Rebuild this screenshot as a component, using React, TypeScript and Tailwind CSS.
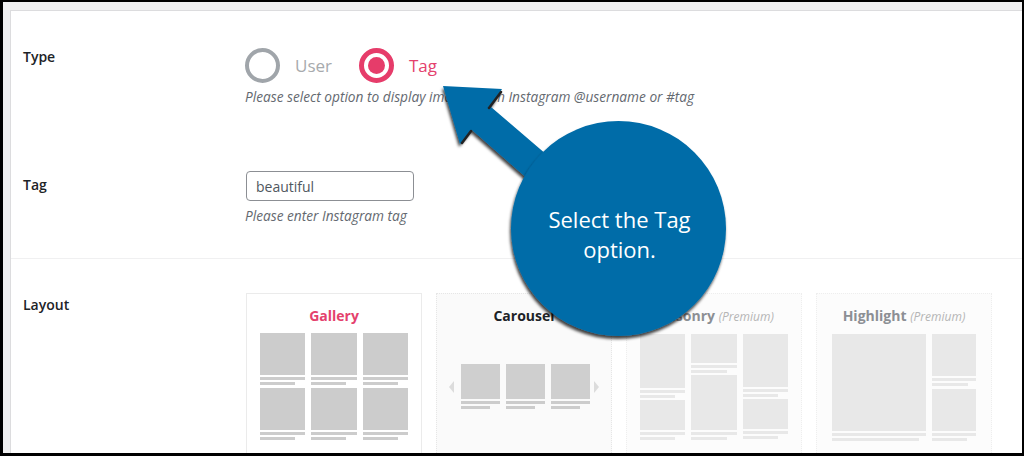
import React from "react";

const font = { fontFamily: '"Open Sans", "Noto Sans", sans-serif' };

function Bars({ short, light }: { short: string; light?: boolean }) {
  const c = light ? "bg-[#e8e8e8]" : "bg-[#cccccc]";
  return (
    <>
      <div className={`h-[3px] mt-[2px] w-full ${c}`} />
      <div className={`h-[3px] mt-[2px] ${short} ${c}`} />
    </>
  );
}

function GalleryCell() {
  return (
    <div className="flex flex-col">
      <div className="h-[42px] bg-[#cccccc]" />
      <Bars short="w-[35px]" />
    </div>
  );
}

function CarouselCell() {
  return (
    <div className="flex flex-col w-[39px]">
      <div className="h-[35px] bg-[#cfcfcf]" />
      <Bars short="w-[29px]" />
    </div>
  );
}

function Box({ h }: { h: string }) {
  return <div className={`${h} bg-[#e8e8e8]`} />;
}

export default function App() {
  return (
    <div
      className="relative w-[1024px] h-[456px] overflow-hidden bg-black pt-[2px] pl-[3px] pr-[2px] pb-[3px]"
      style={font}
    >
      <div className="h-full overflow-hidden bg-[#f0f0f1] pt-[8px] pl-[7px]">
        <div className="h-full border-l border-t border-[#dcdcde] bg-white">
          {/* Type + Tag */}
          <div className="h-[248px] border-b border-[#f0f0f1] pt-[36px] pl-[12px]">
            <div className="flex">
              <div className="w-[222px] text-[14px] leading-[20px] font-semibold text-[#1d2327]">Type</div>
              <div>
                <div className="mt-[1px] h-[35px] flex items-center">
                  <div className="w-[35px] h-[35px] rounded-full border-[4px] border-[#a0a5aa] bg-white" />
                  <span className="ml-[15px] text-[17px] text-[#a7aaad]">User</span>
                  <div className="ml-[27px] w-[35px] h-[35px] rounded-full border-[5px] border-[#e63c6a] bg-white flex items-center justify-center">
                    <div className="w-[17px] h-[17px] rounded-full bg-[#e63c6a]" />
                  </div>
                  <span className="ml-[15px] text-[17px] text-[#e4416d]">Tag</span>
                </div>
                <div className="mt-[4px] text-[13.7px] leading-[20px] italic text-[#646970]">
                  Please select option to display images from Instagram @username or #tag
                </div>
              </div>
            </div>
            <div className="flex mt-[64px]">
              <div className="w-[222px] pt-[4px] text-[14px] leading-[20px] font-semibold text-[#1d2327]">Tag</div>
              <div>
                <div className="ml-[1px] w-[168px] h-[30px] rounded-[4px] border border-[#8c8f94] px-[9px] flex items-center text-[14px] text-[#50575e]">
                  beautiful
                </div>
                <div className="mt-[5px] text-[13.7px] leading-[20px] italic text-[#646970]">Please enter Instagram tag</div>
              </div>
            </div>
          </div>

          {/* Layout */}
          <div className="flex pt-[34px] pl-[12px]">
            <div className="w-[223px] mt-[2px] text-[14px] leading-[20px] font-semibold text-[#1d2327]">Layout</div>
            <div className="flex gap-[14px]">
              {/* Gallery */}
              <div className="w-[176px] h-[200px] border border-[#ebebeb] bg-white pt-[12px]">
                <div className="text-center text-[14px] leading-[20px] font-bold text-[#e4416d]">Gallery</div>
                <div className="mt-[7px] px-[13px] grid grid-cols-3 gap-x-[6px] gap-y-[3px]">
                  <GalleryCell />
                  <GalleryCell />
                  <GalleryCell />
                  <GalleryCell />
                  <GalleryCell />
                  <GalleryCell />
                </div>
              </div>

              {/* Carousel */}
              <div className="w-[176px] h-[200px] border border-dotted border-[#e6e6e6] bg-[#fafafa] pt-[12px]">
                <div className="text-center text-[14px] leading-[20px] font-bold text-[#1d2327]">Carousel</div>
                <div className="mt-[38px] flex items-center justify-center">
                  <div className="w-0 h-0 border-y-[6px] border-y-transparent border-r-[5px] border-r-[#dcdcdc] mr-[7px]" />
                  <div className="flex gap-[6px]">
                    <CarouselCell />
                    <CarouselCell />
                    <CarouselCell />
                  </div>
                  <div className="w-0 h-0 border-y-[6px] border-y-transparent border-l-[5px] border-l-[#dcdcdc] ml-[4px]" />
                </div>
              </div>

              {/* Masonry */}
              <div className="w-[176px] h-[200px] border border-dotted border-[#eeeeee] bg-[#fcfcfc] pt-[12px]">
                <div className="text-center text-[14px] leading-[20px]">
                  <span className="font-bold text-[#8c8f94]">Masonry</span>{" "}
                  <span className="italic text-[12px] text-[#b5b5b5]">(Premium)</span>
                </div>
                <div className="mt-[7px] px-[13px] grid grid-cols-3 gap-x-[6px]">
                  <div className="flex flex-col">
                    <Box h="h-[54px]" />
                    <Bars short="w-[35px]" light />
                    <div className="mt-[2px]" />
                    <Box h="h-[30px]" />
                    <Bars short="w-[35px]" light />
                  </div>
                  <div className="flex flex-col">
                    <Box h="h-[29px]" />
                    <Bars short="w-[36px]" light />
                    <div className="mt-[2px]" />
                    <Box h="h-[55px]" />
                    <Bars short="w-[36px]" light />
                  </div>
                  <div className="flex flex-col">
                    <Box h="h-[53px]" />
                    <Bars short="w-[35px]" light />
                    <div className="mt-[2px]" />
                    <Box h="h-[30px]" />
                    <Bars short="w-[35px]" light />
                  </div>
                </div>
              </div>

              {/* Highlight */}
              <div className="w-[176px] h-[200px] border border-dotted border-[#eeeeee] bg-[#fcfcfc] pt-[12px]">
                <div className="text-center text-[14px] leading-[20px]">
                  <span className="font-bold text-[#8c8f94]">Highlight</span>{" "}
                  <span className="italic text-[12px] text-[#b5b5b5]">(Premium)</span>
                </div>
                <div className="mt-[7px] px-[15px] flex gap-[6px]">
                  <div className="w-[96px] flex flex-col">
                    <Box h="h-[97px]" />
                    <Bars short="w-[87px]" light />
                  </div>
                  <div className="w-[45px] flex flex-col">
                    <Box h="h-[42px]" />
                    <Bars short="w-[36px]" light />
                    <div className="mt-[3px]" />
                    <Box h="h-[42px]" />
                    <Bars short="w-[35px]" light />
                  </div>
                </div>
              </div>
            </div>
          </div>
        </div>
      </div>

      {/* callout overlay */}
      <svg className="absolute inset-0 pointer-events-none" width="1024" height="456" viewBox="0 0 1024 456">
        <defs>
          <filter id="sh" x="-20%" y="-20%" width="140%" height="140%">
            <feDropShadow dx="-1" dy="3" stdDeviation="1.5" floodColor="#000" floodOpacity="0.75" />
          </filter>
        </defs>
        <g filter="url(#sh)">
          <polygon
            points="443,86 502,89 491,107 582,185 562,209 472,130 460,144"
            fill="#016ca8"
          />
        </g>
        <path d="M501,92 L489,108" stroke="#222" strokeWidth="2.5" strokeLinecap="round" />
        <path d="M471,131 L462,143" stroke="#222" strokeWidth="2.5" strokeLinecap="round" />
        <circle cx="618.5" cy="228.5" r="107.5" fill="#016ca8" filter="url(#sh)" />
      </svg>
      <div className="absolute left-[512px] top-[204px] w-[215px] text-center text-white text-[22px] leading-[30px]">
        Select the Tag
        <br />
        option.
      </div>
    </div>
  );
}
